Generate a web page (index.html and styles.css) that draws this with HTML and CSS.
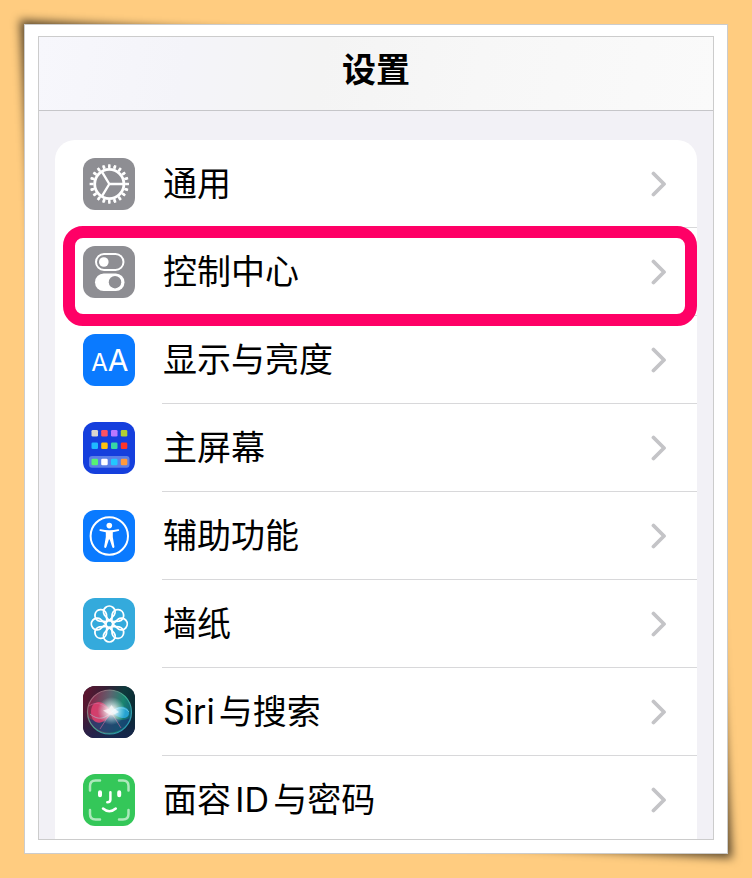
FILE: index.html
```html
<!DOCTYPE html>
<html lang="zh-CN">
<head>
    <meta charset="UTF-8">
    <meta name="viewport" content="width=device-width, initial-scale=1.0">
    <title>设置</title>
    <link rel="stylesheet" href="styles.css">
</head>
<body>
    <svg class="defs" aria-hidden="true">
        <symbol id="chevron" viewBox="0 0 16 26">
            <path d="M2.5 2.5L13 13L2.5 23.5" fill="none" stroke="currentColor" stroke-width="3.8" stroke-linecap="round" stroke-linejoin="round"/>
        </symbol>
    </svg>

    <div class="paper">
        <main class="screen">
            <header class="header">
                <h1>设置</h1>
            </header>

            <ul class="settings-list">
                <li class="settings-item">
                    <a href="#general">
                        <svg class="icon icon-gray" viewBox="0 0 52 52" fill="none" stroke="#fff" aria-hidden="true">
                            <circle cx="26.3" cy="26" r="14.6" stroke-width="2.8"/>
                            <circle cx="26.3" cy="26" r="17.2" stroke-width="2.8" pathLength="220" stroke-dasharray="5.4 5.6" stroke-dashoffset="2.7"/>
                            <circle cx="26.3" cy="26" r="18.8" stroke-width="1.8" pathLength="220" stroke-dasharray="4.4 6.6" stroke-dashoffset="2.2"/>
                            <path d="M26.3 26H40M26.3 26L19 13.8M26.3 26L19 38.2" stroke-width="2.4"/>
                        </svg>
                        <span class="label">通用</span>
                        <svg class="chevron" aria-hidden="true"><use href="#chevron"/></svg>
                    </a>
                </li>
                <li class="settings-item highlighted">
                    <a href="#control-center">
                        <svg class="icon icon-gray" viewBox="0 0 52 52" aria-hidden="true">
                            <rect x="13" y="8" width="27.5" height="16" rx="8" fill="none" stroke="#fff" stroke-width="2"/>
                            <circle cx="20.8" cy="16" r="4.8" fill="#fff"/>
                            <rect x="12" y="27.5" width="29.5" height="17.5" rx="8.7" fill="#fff"/>
                            <circle cx="32" cy="36.2" r="6.2" fill="#8e8e93"/>
                        </svg>
                        <span class="label">控制中心</span>
                        <svg class="chevron" aria-hidden="true"><use href="#chevron"/></svg>
                    </a>
                </li>
                <li class="settings-item">
                    <a href="#display">
                        <svg class="icon icon-blue" viewBox="0 0 52 52" fill="#fff" aria-hidden="true">
                            <text class="small-a" x="16.5" y="37" text-anchor="middle">A</text>
                            <text class="big-a" x="35" y="37" text-anchor="middle">A</text>
                        </svg>
                        <span class="label">显示与亮度</span>
                        <svg class="chevron" aria-hidden="true"><use href="#chevron"/></svg>
                    </a>
                </li>
                <li class="settings-item">
                    <a href="#home-screen">
                        <svg class="icon icon-home" viewBox="0 0 52 52" aria-hidden="true">
                            <rect x="6" y="34" width="40.5" height="11.8" rx="3" fill="#5b7fe8"/>
                            <rect x="8.5" y="8" width="6.5" height="6.5" rx="1.3" fill="#d9d5ce"/>
                            <rect x="18.2" y="8" width="6.5" height="6.5" rx="1.3" fill="#ff5263"/>
                            <rect x="28" y="8" width="6.5" height="6.5" rx="1.3" fill="#b877ff"/>
                            <rect x="37.8" y="8" width="6.5" height="6.5" rx="1.3" fill="#b1cf34"/>
                            <rect x="8.5" y="20.5" width="6.5" height="6.5" rx="1.3" fill="#1fb8ff"/>
                            <rect x="18.2" y="20.5" width="6.5" height="6.5" rx="1.3" fill="#ffc20e"/>
                            <rect x="28" y="20.5" width="6.5" height="6.5" rx="1.3" fill="#38d6a4"/>
                            <rect x="37.8" y="20.5" width="6.5" height="6.5" rx="1.3" fill="#ff3529"/>
                            <rect x="8.5" y="36.7" width="6.5" height="6.5" rx="1.3" fill="#57f274"/>
                            <rect x="18.2" y="36.7" width="6.5" height="6.5" rx="1.3" fill="#fff"/>
                            <rect x="28" y="36.7" width="6.5" height="6.5" rx="1.3" fill="#22c7ff"/>
                            <rect x="37.8" y="36.7" width="6.5" height="6.5" rx="1.3" fill="#ff9a3c"/>
                        </svg>
                        <span class="label">主屏幕</span>
                        <svg class="chevron" aria-hidden="true"><use href="#chevron"/></svg>
                    </a>
                </li>
                <li class="settings-item">
                    <a href="#accessibility">
                        <svg class="icon icon-blue" viewBox="0 0 52 52" aria-hidden="true">
                            <circle cx="26.3" cy="26" r="18.7" fill="none" stroke="#fff" stroke-width="2"/>
                            <circle cx="26.3" cy="15.6" r="2.8" fill="#fff"/>
                            <path d="M17.6 19.2Q26.3 21.2 35 19.2Q36.2 19 36.2 20.1Q36.2 20.9 35.4 21.1L29.8 22.2V27L31.4 36.6Q31.5 37.7 30.5 37.9Q29.6 38 29.2 37L26.7 29.6H25.9L23.4 37Q23 38 22.1 37.9Q21.1 37.7 21.2 36.6L22.8 27V22.2L17.2 21.1Q16.4 20.9 16.4 20.1Q16.4 19 17.6 19.2Z" fill="#fff"/>
                        </svg>
                        <span class="label">辅助功能</span>
                        <svg class="chevron" aria-hidden="true"><use href="#chevron"/></svg>
                    </a>
                </li>
                <li class="settings-item">
                    <a href="#wallpaper">
                        <svg class="icon icon-cyan" viewBox="0 0 52 52" fill="none" stroke="#fff" stroke-width="1.8" stroke-linejoin="round" aria-hidden="true">
                            <defs>
                                <path id="petal" d="M26.3 22.6L21.4 17A5.8 5.8 0 1 1 31.2 17Z"/>
                            </defs>
                            <use href="#petal"/>
                            <use href="#petal" transform="rotate(45 26.3 26)"/>
                            <use href="#petal" transform="rotate(90 26.3 26)"/>
                            <use href="#petal" transform="rotate(135 26.3 26)"/>
                            <use href="#petal" transform="rotate(180 26.3 26)"/>
                            <use href="#petal" transform="rotate(225 26.3 26)"/>
                            <use href="#petal" transform="rotate(270 26.3 26)"/>
                            <use href="#petal" transform="rotate(315 26.3 26)"/>
                            <circle cx="26.3" cy="26" r="3.4"/>
                        </svg>
                        <span class="label">墙纸</span>
                        <svg class="chevron" aria-hidden="true"><use href="#chevron"/></svg>
                    </a>
                </li>
                <li class="settings-item">
                    <a href="#siri">
                        <svg class="icon icon-siri" viewBox="0 0 52 52" aria-hidden="true">
                            <defs>
                                <linearGradient id="siri-bg" x1="0" y1="0" x2="1" y2="0.3">
                                    <stop offset="0" stop-color="#65132f"/>
                                    <stop offset="0.45" stop-color="#322136"/>
                                    <stop offset="0.75" stop-color="#0e3a3c"/>
                                    <stop offset="1" stop-color="#0b2b34"/>
                                </linearGradient>
                                <linearGradient id="siri-low" x1="0" y1="0" x2="0" y2="1">
                                    <stop offset="0.5" stop-color="#15204e" stop-opacity="0"/>
                                    <stop offset="1" stop-color="#1c2359" stop-opacity="0.7"/>
                                </linearGradient>
                                <linearGradient id="siri-orb" x1="0" y1="0.4" x2="1" y2="0.6">
                                    <stop offset="0" stop-color="#8c2146"/>
                                    <stop offset="0.45" stop-color="#5c6470"/>
                                    <stop offset="0.75" stop-color="#1a8570"/>
                                    <stop offset="1" stop-color="#0f5c77"/>
                                </linearGradient>
                                <linearGradient id="siri-rim" x1="0" y1="0" x2="1" y2="1">
                                    <stop offset="0" stop-color="#e0527c"/>
                                    <stop offset="0.5" stop-color="#46c6a0"/>
                                    <stop offset="1" stop-color="#2f9fdc"/>
                                </linearGradient>
                                <radialGradient id="siri-glow">
                                    <stop offset="0" stop-color="#fff"/>
                                    <stop offset="0.3" stop-color="#fff" stop-opacity="0.9"/>
                                    <stop offset="1" stop-color="#b9fff4" stop-opacity="0"/>
                                </radialGradient>
                            </defs>
                            <rect width="52" height="52" fill="url(#siri-bg)"/>
                            <rect width="52" height="52" fill="url(#siri-low)"/>
                            <circle cx="26.5" cy="26" r="22" fill="url(#siri-orb)"/>
                            <path d="M5.5 32Q15 39 28 29Q36 37 47 32A22 22 0 0 1 5.5 32Z" fill="#173671" opacity="0.7"/>
                            <path d="M28 27C22 12 8 13 8 26C8 40 22 40 28 27Z" fill="#e34070" opacity="0.85"/>
                            <path d="M28 25C36 18 46 20 46 27C46 34 35 34 28 25Z" fill="#2aabe2" opacity="0.85"/>
                            <path d="M6 20C15 14 22 20 28 26L38 42M28 26L17 43" fill="none" stroke="#d66b9c" stroke-width="1" opacity="0.6"/>
                            <path d="M7 28C17 36 23 31 29 26C35 20 42 21 46 26" fill="none" stroke="#9ce4ed" stroke-width="1" opacity="0.5"/>
                            <circle cx="28.5" cy="25" r="14" fill="url(#siri-glow)" opacity="0.85"/>
                            <path d="M28.5 19L31 22.5L36 26L31 28.5L28 29L24 27L20 24.5L26 22.8Z" fill="#fff" opacity="0.6"/>
                            <circle cx="26.5" cy="26" r="22" fill="none" stroke="url(#siri-rim)" stroke-width="1.2" opacity="0.8"/>
                        </svg>
                        <span class="label">Siri与搜索</span>
                        <svg class="chevron" aria-hidden="true"><use href="#chevron"/></svg>
                    </a>
                </li>
                <li class="settings-item">
                    <a href="#face-id">
                        <svg class="icon icon-green" viewBox="0 0 52 52" fill="none" stroke="#fff" stroke-width="2.5" stroke-linecap="round" aria-hidden="true">
                            <path d="M7 16.5V12Q7 6.5 12.5 6.5H17M36 6.5H40Q45.5 6.5 45.5 12V16.5M45.5 36V40Q45.5 45.5 40 45.5H36M17 45.5H12.5Q7 45.5 7 40V36" opacity="0.6"/>
                            <path d="M17 18.2V21.2M36.2 18.2V21.2" stroke-width="4"/>
                            <path d="M27.4 18.2V25.5Q27.4 28.3 24.3 28.3"/>
                            <path d="M20 34.5Q26.3 40 32.8 34.5"/>
                        </svg>
                        <span class="label">面容ID与密码</span>
                        <svg class="chevron" aria-hidden="true"><use href="#chevron"/></svg>
                    </a>
                </li>
            </ul>
        </main>
    </div>
</body>
</html>
```
FILE: styles.css
```css
* {
    margin: 0;
    padding: 0;
    box-sizing: border-box;
}

body {
    font-family: Inter, 'Noto Sans CJK SC', sans-serif;
    background: #ffcc80;
    min-height: 100vh;
    padding: 24px;
    color: #000;
    isolation: isolate;
}

.defs {
    display: none;
}

.paper {
    position: relative;
    padding: 11px 13px 13px;
    background: white;
    border: 1px solid #ccc;
}

/* Lifted corners */
.paper::before,
.paper::after {
    content: '';
    position: absolute;
    z-index: -1;
    width: 50%;
    height: 50%;
    background: rgba(0,0,0,0.65);
    filter: blur(5px);
}

.paper::before {
    top: -5px;
    left: -5px;
    transform: skew(3deg, 3deg);
    transform-origin: top left;
}

.paper::after {
    right: -5px;
    bottom: -5px;
    transform: skew(3deg, 3deg);
    transform-origin: bottom right;
}

.screen {
    overflow: hidden;
    background: #f2f1f6;
    border: 1px solid #ccc;
}

.header {
    padding: 9px 16px 16px;
    text-align: center;
    background: linear-gradient(100deg, #f7f7fc 0%, #f4f4f9 22%, #f4f4f4 42%, #f7f7f7 65%, #fafafa 100%);
    border-bottom: 1px solid #c6c6c9;
}

.header h1 {
    font-size: 34px;
    font-weight: bold;
    line-height: 48px;
}

/* The list runs on past the bottom edge of the screen */
.settings-list {
    list-style: none;
    margin: 29px 16px -5px;
    background: white;
    border-radius: 20px 20px 0 0;
}

.settings-item {
    position: relative;
}

.settings-item a {
    display: flex;
    align-items: center;
    height: 88px;
    padding-left: 28px;
    color: inherit;
    text-decoration: none;
}

.settings-item a::after {
    content: '';
    position: absolute;
    left: 107px;
    right: 0;
    bottom: 0;
    border-bottom: 1px solid #d8d8da;
}

.settings-item:last-child a::after {
    display: none;
}

.icon {
    width: 52px;
    height: 52px;
    border-radius: 12px;
    flex-shrink: 0;
}

.icon-gray { background: #8e8e93; }
.icon-blue { background: #0a7aff; }
.icon-home { background: #153fdd; }
.icon-cyan { background: #34aadc; }
.icon-siri { background: #1c2035; }
.icon-green { background: #34c759; }

.small-a {
    font-size: 24px;
}

.big-a {
    font-size: 30px;
}

.label {
    flex: 1;
    margin-left: 28px;
    font-size: 34px;
    line-height: 48px;
    text-autospace: normal;
}

.chevron {
    width: 16px;
    height: 26px;
    margin-right: 30px;
    color: #c4c4c7;
}

.highlighted::after {
    content: '';
    position: absolute;
    z-index: 1;
    top: -2px;
    right: 0;
    bottom: -10px;
    left: 8px;
    border: 12px solid #ff0066;
    border-radius: 20px;
    pointer-events: none;
}
```
